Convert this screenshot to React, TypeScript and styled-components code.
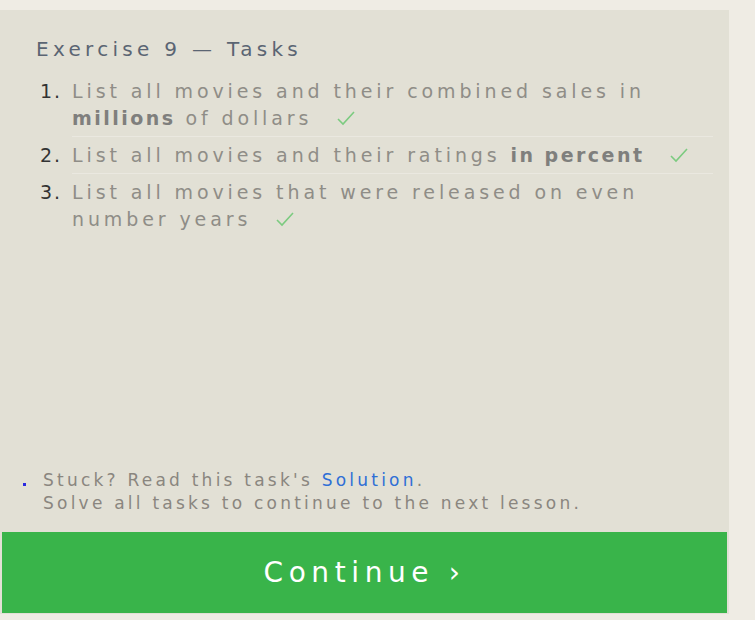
import React from "react";
import styled, { createGlobalStyle } from "styled-components";

const Global = createGlobalStyle`
  html, body { margin: 0; padding: 0; background: #efece4; }
  body { font-family: "DejaVu Sans", "Open Sans", sans-serif; }
`;

const Page = styled.div`
  padding-top: 10px;
  width: 755px;
  height: 620px;
  box-sizing: border-box;
`;

const Panel = styled.section`
  width: 729px;
  height: 604px;
  background: #e2e0d5;
  display: flex;
  flex-direction: column;
  box-sizing: border-box;
  padding: 0 2px 1px 2px;
`;

const Heading = styled.h2`
  margin: 25px 0 0 34px;
  font-size: 20px;
  font-weight: 400;
  line-height: 28px;
  letter-spacing: 0.215em;
  color: #5b6573;
`;

const TaskList = styled.ol`
  margin: 10px 14px 0 38px;
  padding: 0;
  list-style: none;
  counter-reset: task;
`;

const Task = styled.li<{ last?: boolean }>`
  counter-increment: task;
  font-size: 19px;
  line-height: 27px;
  letter-spacing: 0.205em;
  color: #8f8d87;
  padding: 5px 0 4px 0;
  border-bottom: 1px solid ${(p) => (p.last ? "transparent" : "#eae8e0")};
  margin-left: 32px;
  position: relative;
  &::before {
    content: counter(task) ".";
    position: absolute;
    left: -32px;
    letter-spacing: 0.1em;
    color: #333;
  }
`;

const Strong = styled.b`
  font-weight: 700;
  letter-spacing: 0.13em;
  color: #7f7f7d;
`;

const Check = styled.svg`
  display: inline-block;
  width: 20px;
  height: 16px;
  margin-left: 24px;
  vertical-align: -1px;
`;

const Spacer = styled.div`
  flex: 1;
`;

const Notes = styled.ul`
  margin: 0 0 17px 0;
  padding: 0 0 0 41px;
  list-style: none;
  font-size: 17px;
  line-height: 23px;
  letter-spacing: 0.19em;
  color: #8a867f;
`;

const Note = styled.li<{ bullet?: boolean }>`
  position: relative;
  &::before {
    content: "";
    position: absolute;
    display: ${(p) => (p.bullet ? "block" : "none")};
    left: -20px;
    top: 14px;
    width: 3px;
    height: 3px;
    background: #2a2ae0;
  }
`;

const Link = styled.a`
  color: #2f6fd6;
  text-decoration: none;
`;

const Button = styled.button`
  height: 81px;
  width: 100%;
  border: none;
  background: #39b44a;
  color: #fff;
  font-family: "DejaVu Sans", "Open Sans", sans-serif;
  font-size: 28px;
  letter-spacing: 0.2em;
  cursor: pointer;
  padding: 0;
`;

const CheckMark = () => (
  <Check viewBox="0 0 20 16">
    <polyline points="2,9 7,14 18,2" fill="none" stroke="#7ccb80" strokeWidth="1.6" />
  </Check>
);

export default function App() {
  return (
    <>
      <Global />
      <Page>
        <Panel>
          <Heading>Exercise 9 — Tasks</Heading>
          <TaskList>
            <Task>
              List all movies and their combined sales in <Strong>millions</Strong> of dollars
              <CheckMark />
            </Task>
            <Task>
              List all movies and their ratings <Strong>in percent</Strong>
              <CheckMark />
            </Task>
            <Task last>
              List all movies that were released on even number years
              <CheckMark />
            </Task>
          </TaskList>
          <Spacer />
          <Notes>
            <Note bullet>
              Stuck? Read this task's <Link href="#">Solution</Link>.
            </Note>
            <Note>Solve all tasks to continue to the next lesson.</Note>
          </Notes>
          <Button>Continue ›</Button>
        </Panel>
      </Page>
    </>
  );
}
